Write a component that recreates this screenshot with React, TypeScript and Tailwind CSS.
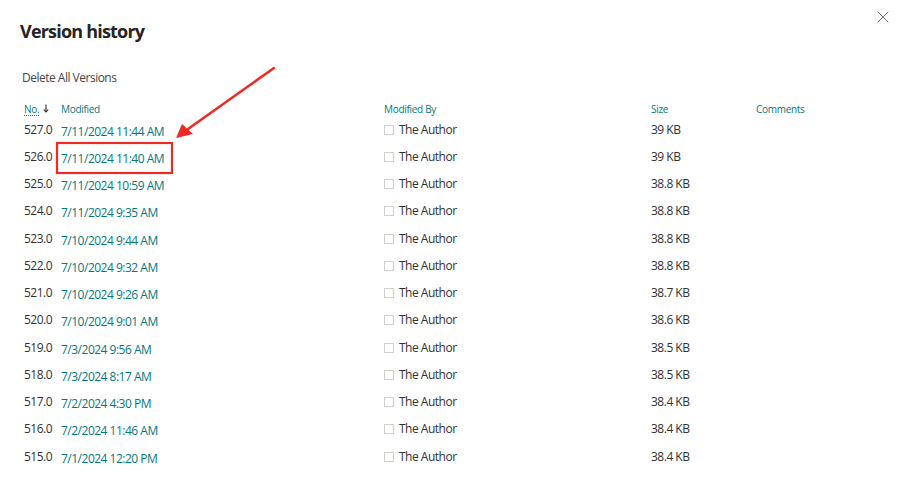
import { X } from 'lucide-react';

const versions = [
    { no: '527.0', modified: '7/11/2024 11:44 AM', size: '39 KB' },
    { no: '526.0', modified: '7/11/2024 11:40 AM', size: '39 KB' },
    { no: '525.0', modified: '7/11/2024 10:59 AM', size: '38.8 KB' },
    { no: '524.0', modified: '7/11/2024 9:35 AM', size: '38.8 KB' },
    { no: '523.0', modified: '7/10/2024 9:44 AM', size: '38.8 KB' },
    { no: '522.0', modified: '7/10/2024 9:32 AM', size: '38.8 KB' },
    { no: '521.0', modified: '7/10/2024 9:26 AM', size: '38.7 KB' },
    { no: '520.0', modified: '7/10/2024 9:01 AM', size: '38.6 KB' },
    { no: '519.0', modified: '7/3/2024 9:56 AM', size: '38.5 KB' },
    { no: '518.0', modified: '7/3/2024 8:17 AM', size: '38.5 KB' },
    { no: '517.0', modified: '7/2/2024 4:30 PM', size: '38.4 KB' },
    { no: '516.0', modified: '7/2/2024 11:46 AM', size: '38.4 KB' },
    { no: '515.0', modified: '7/1/2024 12:20 PM', size: '38.4 KB' },
];

export default function App() {
    return (
        <div
            className="relative w-[900px] h-[493px] bg-white overflow-hidden text-[#323130]"
            style={{ fontFamily: '"Open Sans", "Noto Sans", sans-serif' }}
        >
            <button className="absolute left-[873px] top-[7px] text-[#605e5c]">
                <X size={20} strokeWidth={1} />
            </button>

            <div className="pl-[20px] pt-[18px]">
                <h1 className="text-[18px] font-bold leading-[26px] tracking-[-0.8px] text-[#252423]">Version history</h1>

                <div className="mt-[26px] pl-[2px] text-[12px] leading-[16px] tracking-[-0.5px] text-[#484644]">Delete All Versions</div>

                {/* Header */}
                <div className="mt-[15px] flex h-[16px] items-center pl-[4px] text-[10px] tracking-[-0.3px] text-[#03787c]">
                    <div className="w-[37px] flex items-center gap-[4px]">
                        <span className="underline decoration-dotted underline-offset-2">No.</span>
                        <svg width="6" height="9" viewBox="0 0 6 9" className="-mt-[2px]">
                            <path d="M3 0.5V8M0.8 5.6L3 8L5.2 5.6" fill="none" stroke="#323130" strokeWidth="1.1" />
                        </svg>
                    </div>
                    <div className="w-[323px]">Modified</div>
                    <div className="w-[267px]">Modified By</div>
                    <div className="w-[105px]">Size</div>
                    <div>Comments</div>
                </div>

                {/* Rows */}
                <div className="pl-[4px]">
                    {versions.map(v => (
                        <div key={v.no} className="flex h-[27.25px] items-center text-[12px] tracking-[-0.5px]">
                            <div className="w-[37px] -mt-[2px]">{v.no}</div>
                            <div className="w-[323px] pt-[2px] text-[#03787c]">{v.modified}</div>
                            <div className="w-[267px] flex items-center gap-[5px] -mt-[2px]">
                                <span className="h-[10px] w-[10px] border border-[#d2d0ce] bg-white" />
                                <span>The Author</span>
                            </div>
                            <div className="w-[105px] -mt-[2px]">{v.size}</div>
                            <div />
                        </div>
                    ))}
                </div>
            </div>

            {/* Annotation */}
            <svg className="absolute left-0 top-0 pointer-events-none" width="900" height="493">
                <rect x="57" y="143" width="115" height="30" fill="none" stroke="#ec2b24" strokeWidth="2.2" />
                <line x1="274" y1="68" x2="188" y2="129" stroke="#ec2b24" strokeWidth="2.6" strokeLinecap="round" />
                <polygon points="176,138 182,124 193,134" fill="#ec2b24" />
            </svg>
        </div>
    );
}
